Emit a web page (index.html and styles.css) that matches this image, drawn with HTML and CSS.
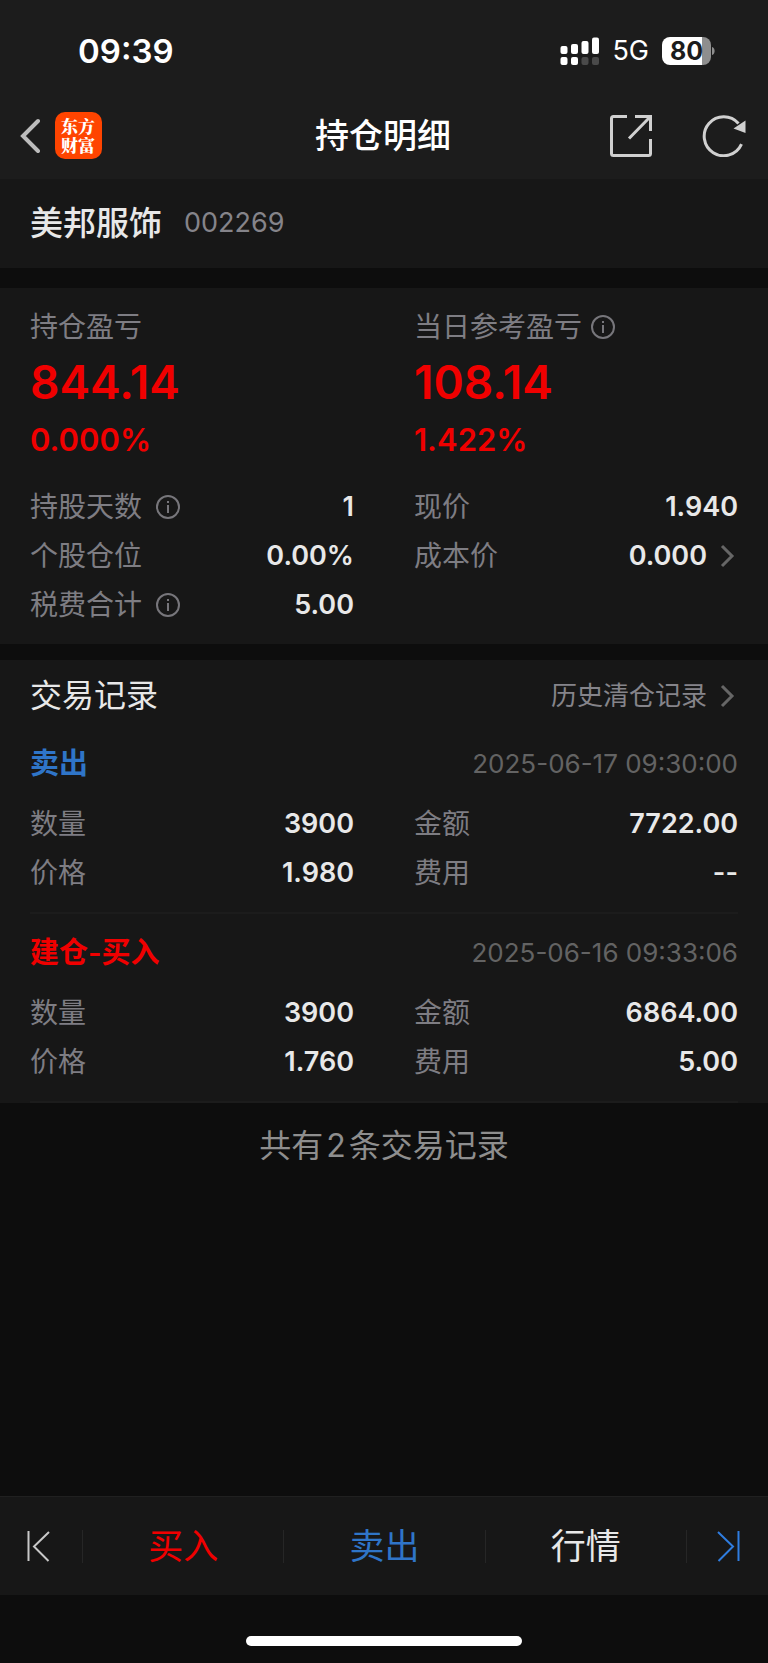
FILE: index.html
```html
<!doctype html>
<html lang="zh-CN">
<head>
    <meta charset="UTF-8">
    <meta name="viewport" content="width=device-width">
    <title>持仓明细</title>
    <link rel="stylesheet" href="styles.css">
</head>
<body>
    <header class="header">
        <div class="status">
            <span class="time">09:39</span>
            <div class="status-right">
                <svg class="signal" width="40" height="28" viewBox="0 0 40 28" fill="#fff">
                    <rect x="0.5" y="9" width="7" height="8" rx="2"/>
                    <rect x="11" y="7" width="7" height="10" rx="2"/>
                    <rect x="21.500" y="4" width="7" height="13" rx="2"/>
                    <rect x="32" y="0.500" width="7" height="16.500" rx="2"/>
                    <rect x="0.500" y="20" width="7" height="8" rx="2"/>
                    <rect x="11" y="20" width="7" height="8" rx="2"/>
                    <rect x="21.500" y="20" width="7" height="8" rx="2" fill="#4a4a4a"/>
                    <rect x="32" y="20" width="7" height="8" rx="2" fill="#4a4a4a"/>
                </svg>
                <span class="network">5G</span>
                <span class="battery">80</span>
                <svg width="4" height="10" viewBox="0 0 4 10" fill="#8e8e8e"><path d="M1 1C4.500 2 4.500 8 1 9z"/></svg>
            </div>
        </div>
        <div class="navbar">
            <div class="nav-left">
                <button class="icon-btn" aria-label="返回">
                    <svg width="20" height="36" viewBox="0 0 20 36" fill="none" stroke="#bcbcbc" stroke-width="4" stroke-linecap="round"><path d="M18 3L3 18l15 15"/></svg>
                </button>
                <div class="logo">东方财富</div>
            </div>
            <h1 class="title">持仓明细</h1>
            <div class="nav-right">
                <button class="icon-btn" aria-label="分享">
                    <svg width="42" height="42" viewBox="0 0 42 42" fill="none" stroke="#d0d0d0" stroke-width="3"><path d="M17 1.500H3.500q-2 0-2 2v35q0 2 2 2h35q2 0 2-2V24M25 1.500h15.500V16M40 2L19 23.500"/></svg>
                </button>
                <button class="icon-btn" aria-label="刷新">
                    <svg width="44" height="42" viewBox="0 0 44 42" fill="none"><path d="M39.500 29.200A19.500 19.500 0 1 1 36.500 8.500" stroke="#d0d0d0" stroke-width="3"/><path d="M43.500 5.500v12.500L31.500 13.500z" fill="#d0d0d0"/></svg>
                </button>
            </div>
        </div>
    </header>

    <main class="main">
        <section class="stock">
            <h2 class="stock-name">美邦服饰</h2>
            <span class="stock-code">002269</span>
        </section>

        <section class="summary">
            <div class="cols">
                <div>
                    <div class="label">持仓盈亏</div>
                    <div class="profit">844.14</div>
                    <div class="percent">0.000%</div>
                </div>
                <div>
                    <div class="label label-tight">当日参考盈亏
                        <button class="icon-btn" aria-label="当日参考盈亏说明"><svg class="info" viewBox="0 0 24 24"><circle cx="12" cy="12" r="11"/><path d="M12 10v8M12 6v2"/></svg></button>
                    </div>
                    <div class="profit">108.14</div>
                    <div class="percent">1.422%</div>
                </div>
            </div>
            <div class="cols rows">
                <div class="row">
                    <span class="label">持股天数
                        <button class="icon-btn" aria-label="持股天数说明"><svg class="info" viewBox="0 0 24 24"><circle cx="12" cy="12" r="11"/><path d="M12 10v8M12 6v2"/></svg></button>
                    </span>
                    <span class="value">1</span>
                </div>
                <div class="row"><span class="label">现价</span><span class="value">1.940</span></div>
                <div class="row"><span class="label">个股仓位</span><span class="value">0.00%</span></div>
                <div class="row">
                    <span class="label">成本价</span>
                    <a class="value" href="#">0.000<svg class="arrow" viewBox="0 0 31 24"><path d="M15 2l10 10-10 10"/></svg></a>
                </div>
                <div class="row">
                    <span class="label">税费合计
                        <button class="icon-btn" aria-label="税费合计说明"><svg class="info" viewBox="0 0 24 24"><circle cx="12" cy="12" r="11"/><path d="M12 10v8M12 6v2"/></svg></button>
                    </span>
                    <span class="value">5.00</span>
                </div>
            </div>
        </section>

        <section class="records">
            <div class="records-head">
                <h2 class="records-title">交易记录</h2>
                <a class="history" href="#">历史清仓记录<svg class="arrow" viewBox="0 0 31 24"><path d="M15 2l10 10-10 10"/></svg></a>
            </div>
            <article class="record">
                <div class="record-head">
                    <h3 class="type sell">卖出</h3>
                    <time class="date">2025-06-17 09:30:00</time>
                </div>
                <div class="cols">
                    <div class="row"><span class="label">数量</span><span class="value">3900</span></div>
                    <div class="row"><span class="label">金额</span><span class="value">7722.00</span></div>
                    <div class="row"><span class="label">价格</span><span class="value">1.980</span></div>
                    <div class="row"><span class="label">费用</span><span class="value">--</span></div>
                </div>
            </article>
            <article class="record">
                <div class="record-head">
                    <h3 class="type buy">建仓-买入</h3>
                    <time class="date">2025-06-16 09:33:06</time>
                </div>
                <div class="cols">
                    <div class="row"><span class="label">数量</span><span class="value">3900</span></div>
                    <div class="row"><span class="label">金额</span><span class="value">6864.00</span></div>
                    <div class="row"><span class="label">价格</span><span class="value">1.760</span></div>
                    <div class="row"><span class="label">费用</span><span class="value">5.00</span></div>
                </div>
            </article>
        </section>
        <p class="total">共有<span class="count">2</span>条交易记录</p>
    </main>

    <footer>
        <nav class="tabbar">
            <button class="tab tab-side" aria-label="上一个">
                <svg width="24" height="32" viewBox="0 0 24 32" fill="none" stroke="#c8c8c8" stroke-width="2"><path d="M2.500 1v30M23 2L8 16.500 22.500 31"/></svg>
            </button>
            <button class="tab buy">买入</button>
            <button class="tab sell">卖出</button>
            <button class="tab">行情</button>
            <button class="tab tab-side" aria-label="下一个">
                <svg width="24" height="32" viewBox="0 0 24 32" fill="none" stroke="#2f7de0" stroke-width="2"><path d="M21.500 1v30M1 2l15 14.500L1.500 31"/></svg>
            </button>
        </nav>
        <div class="home"></div>
    </footer>
</body>
</html>
```
FILE: styles.css
```css
*{padding:0;margin:0;box-sizing:border-box;}

body{
    display:flex;
    flex-direction:column;
    min-height:100vh;
    background:#0d0d0d;
    color:#e8e8e8;
    font-family:Inter,"Noto Sans CJK SC",sans-serif;
    font-size:28px;
    line-height:40px;
}
h1,h2,h3{font-weight:500;}
a{color:inherit;text-decoration:none;}
svg{display:block;flex:none;}
button{
    border:0;
    background:none;
    color:inherit;
    font:inherit;
}
.icon-btn{display:flex;}

/* header */
.header{
    background:#1c1c1c;
    color:#fff;
}
.status{
    display:flex;
    justify-content:space-between;
    align-items:center;
    height:94px;
    padding:8px 53px 0 78px;
}
.time{
    font-size:33px;
    font-weight:600;
}
.status-right{
    display:flex;
    align-items:center;
}
.network{
    margin:0 13px 0 12px;
    font-size:27px;
}
.battery{
    width:49px;
    height:28px;
    border-radius:8px;
    background:linear-gradient(90deg,#fff 40px,#8e8e8e 40px);
    color:#1c1c1c;
    font-size:25px;
    font-weight:700;
    line-height:28px;
    text-align:center;
}
.navbar{
    display:grid;
    grid-template-columns:1fr auto 1fr;
    align-items:center;
    height:85px;
    padding:0 22px 2px 20px;
}
.nav-left,.nav-right{
    display:flex;
    align-items:center;
}
.nav-left{gap:15px;}
.nav-right{
    justify-content:flex-end;
    gap:50px;
}
.logo{
    width:47px;
    height:47px;
    padding:4px 6px;
    border-radius:10px;
    background:#ff4400;
    font-family:"Noto Serif CJK SC","Noto Sans CJK SC",serif;
    font-size:17px;
    font-weight:900;
    line-height:19px;
}
.title{
    font-size:34px;
    line-height:48px;
}

/* stock */
.stock{
    display:flex;
    align-items:center;
    gap:22px;
    height:89px;
    padding:0 30px 2px;
    background:#171717;
}
.stock-name{font-size:33px;}
.stock-code{
    color:#85848a;
    font-size:27px;
}

.summary{
    margin:20px 0 16px;
    padding:19px 30px 15px;
    background:#171717;
}
.cols{
    display:grid;
    grid-template-columns:1fr 1fr;
    column-gap:60px;
}
.rows{margin-top:21px;}
.label{
    display:flex;
    align-items:center;
    gap:14px;
    color:#7e7d83;
    line-height:40px;
}
.label-tight{gap:9px;}
.profit{
    color:#f00000;
    font-size:46px;
    font-weight:600;
    line-height:70px;
}
.percent{
    color:#f00000;
    font-size:31px;
    font-weight:600;
    line-height:46px;
    margin-bottom:-2px;
}
.row{
    display:flex;
    justify-content:space-between;
    align-items:center;
    height:49px;
}
.value{
    display:flex;
    align-items:center;
    font-size:27px;
    font-weight:600;
}
.info{
    width:24px;
    height:24px;
    fill:none;
    stroke:#77767b;
    stroke-width:2;
}
.arrow{
    width:31px;
    height:24px;
    fill:none;
    stroke:#666;
    stroke-width:3;
}

/* records */
.records{background:#171717;}
.records-head{
    display:flex;
    justify-content:space-between;
    align-items:center;
    height:65px;
    padding:6px 30px 0;
}
.records-title{
    font-size:32px;
    font-weight:400;
}
.history{
    display:flex;
    align-items:center;
    color:#85848a;
    font-size:26px;
}
.record{
    margin:0 30px;
    padding:6px 0 15px;
    border-bottom:2px solid #1c1c1c;
}
.record-head{
    display:flex;
    justify-content:space-between;
    align-items:center;
    height:66px;
    margin-bottom:2px;
}
.type{
    font-size:29px;
    font-weight:600;
}
.date{
    color:#636363;
    font-size:26px;
}
.buy{color:#f00000;}
.sell{color:#2f75c8;}
.total{
    color:#8e8e8e;
    font-size:32px;
    line-height:86px;
    text-align:center;
}
.count{margin:0 3px;}

/* footer */
footer{margin-top:auto;}
.tabbar{
    display:flex;
    align-items:center;
    height:99px;
    border-top:1px solid #202020;
    background:#171717;
}
.tab{
    display:flex;
    flex:1;
    justify-content:center;
    align-items:center;
    height:33px;
    font-size:35px;
    line-height:33px;
}
.tab + .tab{border-left:1px solid #262626;}
.tab-side{
    flex:0 0 82px;
    padding:0 6px;
}
.tab-side:first-child{padding-right:12px;}
.tab-side:last-child{padding-left:10px;}
.home{
    width:36%;
    height:10px;
    margin:41px auto 17px;
    border-radius:5px;
    background:#fff;
}
```
